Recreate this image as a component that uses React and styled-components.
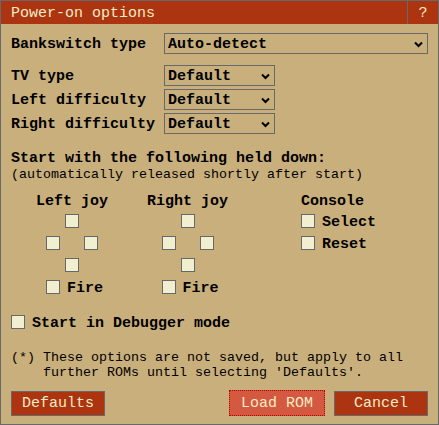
import React from 'react'
import styled, { createGlobalStyle } from 'styled-components'

const GlobalStyle = createGlobalStyle`
  html, body {
    margin: 0;
    padding: 0;
    background: #c9af7c;
  }
`

const Dialog = styled.div`
  box-sizing: border-box;
  width: 439px;
  height: 425px;
  border: 1px solid #686868;
  background: #c9af7c;
  display: flex;
  flex-direction: column;
  font-family: "Liberation Mono", "DejaVu Sans Mono", monospace;
  font-size: 15px;
  color: #000;
`

const TitleBar = styled.div`
  display: flex;
  height: 23px;
  background: #ac3410;
  color: #f0ecc4;
`

const Title = styled.div`
  flex: 1;
  padding: 1px 0 0 10px;
  line-height: 23px;
`

const HelpButton = styled.div`
  width: 30px;
  padding-top: 1px;
  border-left: 1px solid #686868;
  text-align: center;
  line-height: 23px;
`

const Body = styled.div`
  flex: 1;
  display: flex;
  flex-direction: column;
  padding: 9px 10px 8px 10px;
`

const Row = styled.div`
  display: flex;
  align-items: center;
  height: 21px;
  margin-top: ${p => p.$top || 0}px;
`

const Label = styled.div`
  width: 153px;
  padding-top: 2px;
  font-weight: bold;
  white-space: nowrap;
`

const Select = styled.div`
  box-sizing: border-box;
  display: flex;
  align-items: center;
  justify-content: space-between;
  height: 21px;
  width: ${p => (p.$wide ? 'auto' : '111px')};
  flex: ${p => (p.$wide ? 1 : 'none')};
  border: 1px solid #686868;
  padding: 2px 4px 0 3px;
  font-weight: bold;
`

const Heading = styled.div`
  font-weight: bold;
  line-height: 17px;
  margin-top: 16px;
`

const Small = styled.div`
  font-size: 13.33px;
  line-height: 16px;
  white-space: pre;
`

const JoySection = styled.div`
  display: flex;
  margin-top: 10px;
`

const Column = styled.div`
  display: flex;
  flex-direction: column;
  align-items: ${p => p.$align || 'center'};
  width: ${p => p.$width}px;
  margin-left: ${p => p.$left}px;
`

const ColHead = styled.div`
  font-weight: bold;
  line-height: 17px;
  white-space: nowrap;
`

const Pad = styled.div`
  display: grid;
  grid-template-columns: repeat(3, 14px);
  grid-auto-rows: 14px;
  column-gap: 5px;
  row-gap: 8px;
  margin-top: 4px;
`

const List = styled.div`
  display: flex;
  flex-direction: column;
  gap: 8px;
  margin-top: 4px;
`

const Box = styled.div`
  box-sizing: border-box;
  flex-shrink: 0;
  width: 14px;
  height: 14px;
  border: 1px solid #686868;
  background: #f0f0d0;
  grid-column: ${p => p.$col || 'auto'};
`

const Check = styled.div`
  display: flex;
  align-items: center;
  gap: 7px;
  height: 14px;
  font-weight: bold;
  white-space: nowrap;
  grid-column: ${p => p.$span || 'auto'};
  margin-top: ${p => p.$top || 0}px;

  span {
    padding-top: 2px;
  }
`

const Note = styled.div`
  font-size: 13.33px;
  line-height: 15px;
  white-space: pre;
  margin-top: 21px;
`

const Footer = styled.div`
  display: flex;
  align-items: center;
  margin-top: auto;
`

const Button = styled.div`
  box-sizing: border-box;
  width: ${p => (p.$focus ? 96 : 94)}px;
  height: ${p => (p.$focus ? 26 : 25)}px;
  padding-top: 1px;
  border: 1px ${p => (p.$focus ? 'dotted #b00000' : 'solid #686868')};
  background: ${p => (p.$focus ? '#d55941' : '#ac3410')};
  color: #f0ecc4;
  display: flex;
  align-items: center;
  justify-content: center;
  margin-left: ${p => p.$left || 0}px;
`

const Chevron = () => (
  <svg width="9" height="7" viewBox="0 0 9 7">
    <polyline points="1,1.5 4.5,5 8,1.5" fill="none" stroke="#000" strokeWidth="2" />
  </svg>
)

const Dropdown = ({ value, wide }) => (
  <Select $wide={wide}>
    <span>{value}</span>
    <Chevron />
  </Select>
)

const Joystick = () => (
  <Pad>
    <Box $col={2} />
    <Box $col={1} />
    <Box $col={3} />
    <Box $col={2} />
    <Check $span="1 / 4">
      <Box />
      <span>Fire</span>
    </Check>
  </Pad>
)

export default function App() {
  return (
    <Dialog>
      <GlobalStyle />
      <TitleBar>
        <Title>Power-on options</Title>
        <HelpButton>?</HelpButton>
      </TitleBar>
      <Body>
        <Row>
          <Label>Bankswitch type</Label>
          <Dropdown value="Auto-detect" wide />
        </Row>
        <Row $top={11}>
          <Label>TV type</Label>
          <Dropdown value="Default" />
        </Row>
        <Row $top={3}>
          <Label>Left difficulty</Label>
          <Dropdown value="Default" />
        </Row>
        <Row $top={3}>
          <Label>Right difficulty</Label>
          <Dropdown value="Default" />
        </Row>

        <Heading>Start with the following held down:</Heading>
        <Small>(automatically released shortly after start)</Small>

        <JoySection>
          <Column $width={72} $left={25}>
            <ColHead>Left joy</ColHead>
            <Joystick />
          </Column>
          <Column $width={81} $left={39}>
            <ColHead>Right joy</ColHead>
            <Joystick />
          </Column>
          <Column $width={80} $left={73} $align="flex-start">
            <ColHead>Console</ColHead>
            <List>
              <Check>
                <Box />
                <span>Select</span>
              </Check>
              <Check>
                <Box />
                <span>Reset</span>
              </Check>
            </List>
          </Column>
        </JoySection>

        <Check $top={21}>
          <Box />
          <span>Start in Debugger mode</span>
        </Check>

        <Note>
          {"(*) These options are not saved, but apply to all\n    further ROMs until selecting 'Defaults'."}
        </Note>

        <Footer>
          <Button>Defaults</Button>
          <Button $focus $left={124}>Load ROM</Button>
          <Button $left={9}>Cancel</Button>
        </Footer>
      </Body>
    </Dialog>
  )
}
